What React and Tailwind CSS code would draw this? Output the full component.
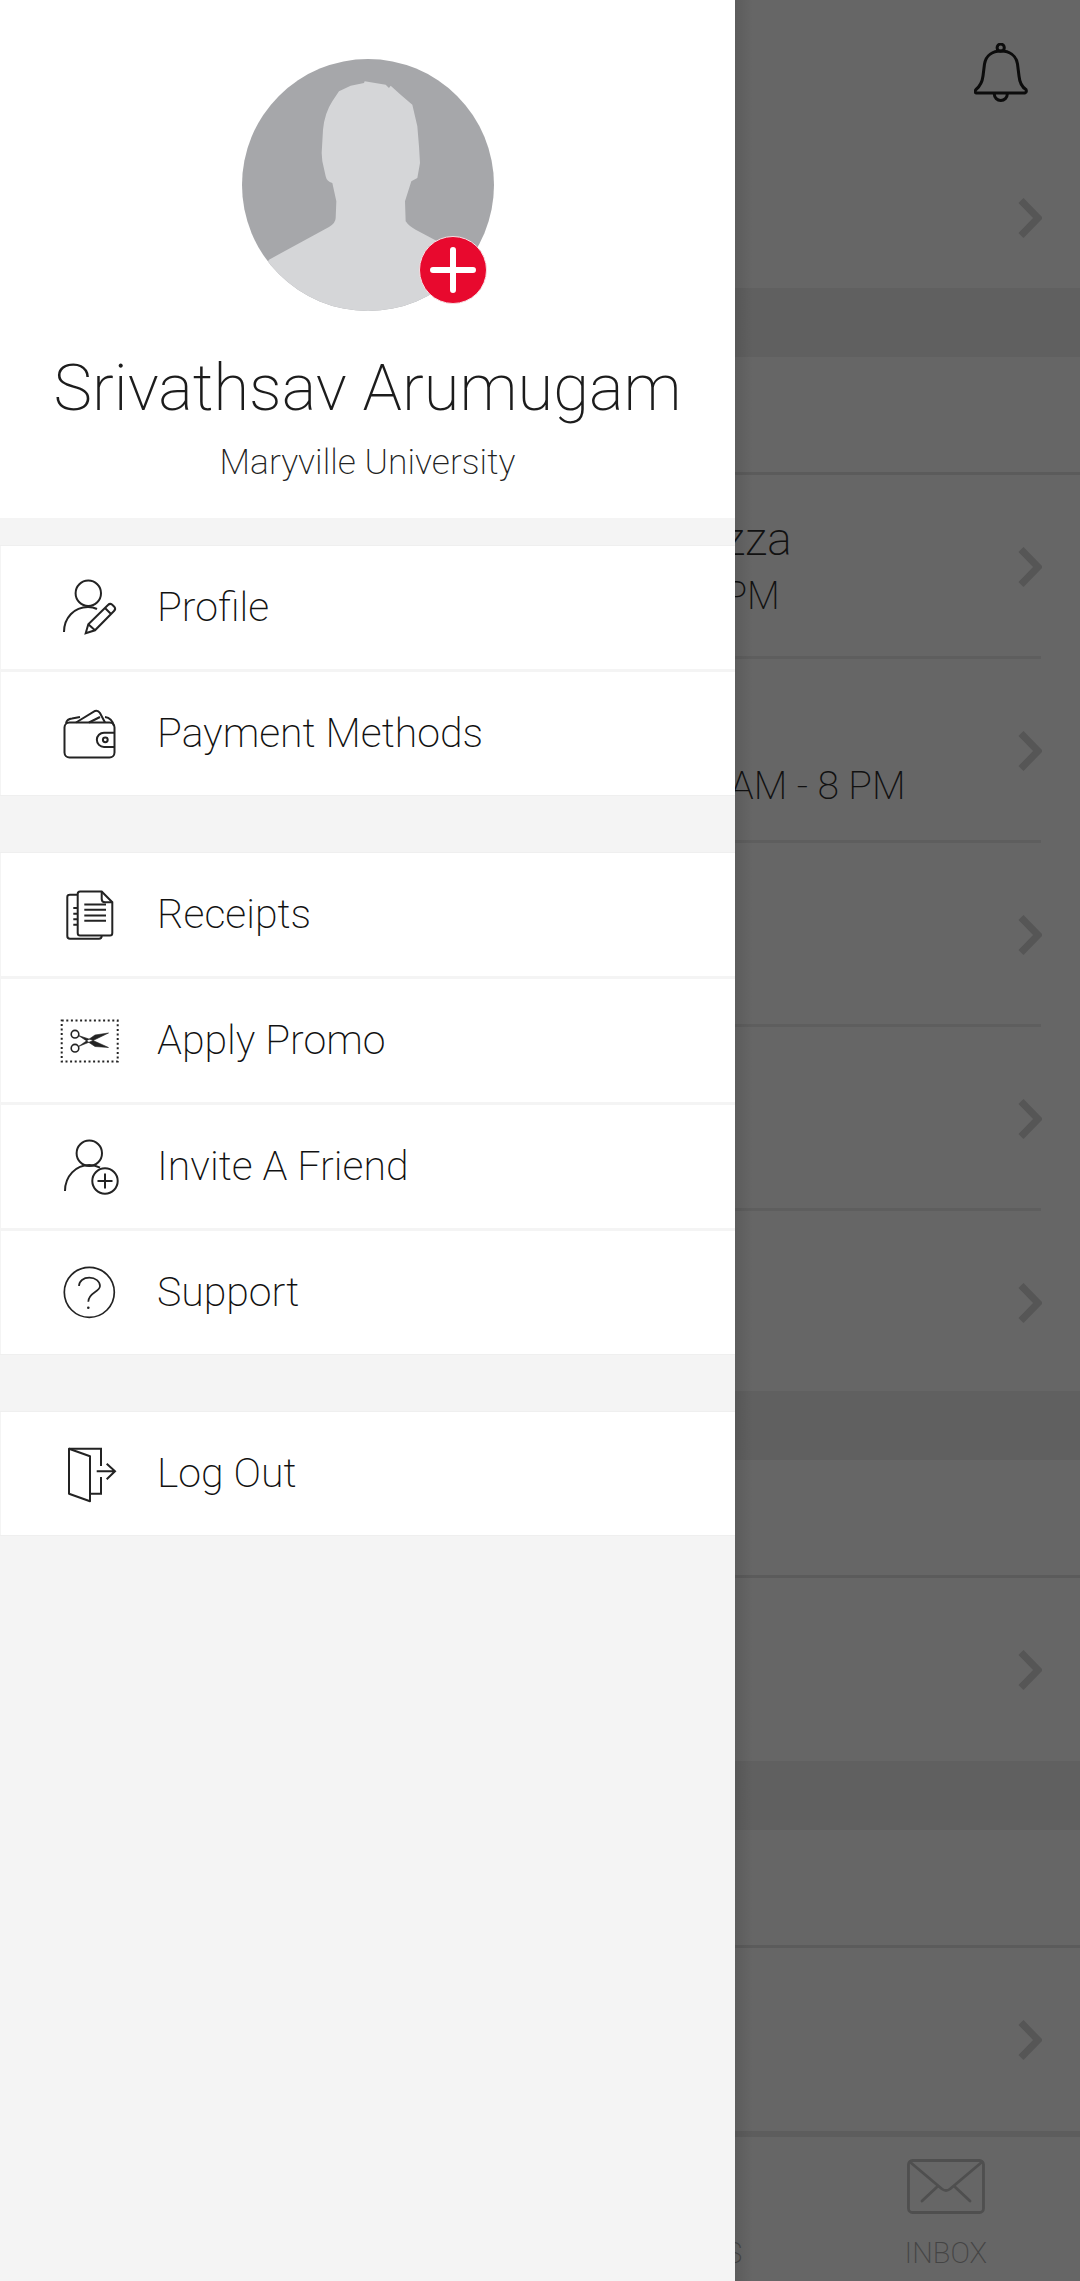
import { useId } from "react";

const ink = "#232323";

function Avatar() {
  const clip = useId();
  return (
    <div className="relative w-[252px] h-[252px]">
      <svg width="252" height="252" viewBox="124 88 756 756">
        <clipPath id={clip}>
          <circle cx="502" cy="466" r="378" />
        </clipPath>
        <circle cx="502" cy="466" r="378" fill="#a6a7aa" />
        <path
          clipPath={`url(#${clip})`}
          fill="#d5d6d8"
          d="M205 690 L385 592 Q405 580 405 565 L407 515 L395 460 Q378 455 375 440 L365 395 L363 370 L367 300 Q372 250 395 215 L415 185 L450 168 L490 160 L492 155 L555 165 L565 175 L570 168 L600 195 L635 225 L650 290 L655 350 L658 400 L650 445 L632 455 L613 515 L615 575 Q625 590 645 600 L720 640 L900 860 L100 860 Z"
        />
      </svg>
      <div className="absolute left-[177px] top-[177px] w-[68px] h-[68px] rounded-full bg-[#e8092e] border border-[#f7dfe3] flex items-center justify-center">
        <svg width="46" height="46" viewBox="0 0 46 46">
          <path d="M23 3 V43 M3 23 H43" stroke="#fff" strokeWidth="6" strokeLinecap="round" />
        </svg>
      </div>
    </div>
  );
}

function Glyph({ children }) {
  return (
    <svg width="60" height="60" viewBox="0 0 60 60" fill="none" stroke={ink} strokeWidth="2" className="shrink-0">
      {children}
    </svg>
  );
}

const icons = {
  profile: (
    <Glyph>
      <circle cx="29.3" cy="15.3" r="12.7" />
      <path d="M5 54 C5 40 15 29 29 29 C32 29 35 29.5 38 31" />
      <path d="M26.7 55.3 L29.3 46.3 L49 27 Q51 25 53 26.5 L55.5 29 Q57 31 55 33 L36 52.3 Z M29.3 46.3 L36 52.3 M46 30 L52 36" />
    </Glyph>
  ),
  wallet: (
    <Glyph>
      <rect x="5.5" y="18.5" width="50" height="35" rx="5" />
      <path d="M7 19 Q8 15 13 14.5 L21 13 M17 18.5 L36 7 Q39 6 41 9 L46 18.5 M30 18.5 L41 13 M46 13 Q53 14 55 22" />
      <path d="M55.3 28.7 H45 a7 7 0 0 0 0 14.3 H55.3" />
      <circle cx="46.3" cy="35.8" r="2.4" />
    </Glyph>
  ),
  receipts: (
    <Glyph>
      <path d="M18.7 9.8 H11 Q8.3 9.8 8.3 12 V51 Q8.3 53.8 11 53.8 H40 Q42.7 53.8 42.7 50.5" />
      <path d="M21 6.5 H42.7 L53.3 17.2 V48 Q53.3 50.5 51 50.5 H21 Q18.7 50.5 18.7 48 V9 Q18.7 6.5 21 6.5 Z" />
      <path d="M42.7 6.5 V14 Q42.7 17.2 46 17.2 H53.3" />
      <path d="M25.3 19.5 H47 M25.3 24.8 H47 M25.3 30.5 H47 M25.3 35.8 H47 M14.3 23 H18.7 M14.3 28.8 H18.7 M14.3 34.2 H18.7 M14.3 39.8 H18.7" />
    </Glyph>
  ),
  promo: (
    <Glyph>
      <rect x="2.7" y="9.5" width="56" height="41" strokeDasharray="2 2.6" />
      <circle cx="16" cy="23.2" r="3.8" strokeWidth="1.6" />
      <circle cx="16" cy="37.2" r="3.8" strokeWidth="1.6" />
      <path fill={ink} stroke={ink} strokeWidth="0.6" d="M19.5 24.5 L33 29 L49.5 36.5 L36 35.5 Z M19.5 35.5 L33 30 L49.5 22 L36 24 Z" />
    </Glyph>
  ),
  invite: (
    <Glyph>
      <circle cx="30.3" cy="16.3" r="12.7" />
      <path d="M6 54 C6 39 17 28 30.3 28 C34 28 38 29 41 30.7" />
      <circle cx="46" cy="44" r="12.7" />
      <path d="M46 36.5 V51.5 M38.5 44 H53.5" />
    </Glyph>
  ),
  support: (
    <Glyph>
      <circle cx="30.3" cy="29.3" r="25" strokeWidth="1.7" />
      <path strokeWidth="1.7" d="M20 23 C20 18 24.5 14.7 30.3 14.7 C36.5 14.7 41 18.3 41 23 C41 29 29.3 29.5 29.3 38.7" />
      <circle cx="29.3" cy="44.7" r="1.3" fill={ink} stroke="none" />
    </Glyph>
  ),
  logout: (
    <Glyph>
      <path d="M10 4.7 L31 12.3 V57.3 L10 49.7 Z" strokeLinejoin="round" />
      <path d="M10 4.7 H42 V22 M42 33 V49.7 H31" />
      <path d="M37.7 27.3 H56 M47.7 19.7 L56 27.3 L47.7 35.3" />
    </Glyph>
  ),
};

const groups = [
  [
    { icon: "profile", label: "Profile" },
    { icon: "wallet", label: "Payment Methods" },
  ],
  [
    { icon: "receipts", label: "Receipts" },
    { icon: "promo", label: "Apply Promo" },
    { icon: "invite", label: "Invite A Friend" },
    { icon: "support", label: "Support" },
  ],
  [{ icon: "logout", label: "Log Out" }],
];

function Drawer() {
  return (
    <aside className="absolute left-0 top-0 h-full w-[735px] bg-[#f4f4f4] flex flex-col">
      <div className="bg-white h-[518px] pt-[59px] flex flex-col items-center">
        <Avatar />
        <div className="mt-[37px] text-[65px] leading-[80px] font-extralight text-[#1c1c1c]">Srivathsav Arumugam</div>
        <div className="mt-[12px] text-[35.5px] leading-[44px] font-extralight text-[#222]">Maryville University</div>
      </div>
      <div className="pt-[27px] flex flex-col gap-[56px]">
        {groups.map((group, i) => (
          <div key={i} className="flex flex-col gap-[3px] border-y border-[#efefef]">
            {group.map((row) => (
              <div key={row.label} className="h-[123px] ml-[1px] bg-white flex items-center pl-[58px]">
                {icons[row.icon]}
                <span className="ml-[38px] text-[41px] font-extralight text-[#111]">{row.label}</span>
              </div>
            ))}
          </div>
        ))}
      </div>
    </aside>
  );
}

function Chevron({ className = "" }) {
  return (
    <svg width="24" height="40" viewBox="0 0 24 40" fill="none" className={className}>
      <path d="M3 2.5 L20 20 L3 37.5" stroke="#565656" strokeWidth="7" />
    </svg>
  );
}

function Band() {
  return <div className="h-[69px] bg-[#606060]" />;
}

function TitleRow() {
  return <div className="h-[118px] border-b-[3px] border-[#5b5b5b]" />;
}

function ListRow({ height = "h-[184px]", lines, last }) {
  return (
    <div className={`${height} flex items-center relative`}>
      {lines}
      <Chevron className="absolute right-[38px] top-[72px]" />
      {!last && <div className="absolute left-0 right-[39px] bottom-0 h-[3px] bg-[#5e5e5e]" />}
    </div>
  );
}

function App() {
  return (
    <div className="relative w-[1080px] h-[2281px] overflow-hidden bg-[#666666] font-['Roboto',sans-serif]">
      <main className="flex flex-col h-full">
        <div className="h-[146px] flex justify-end pt-[43px] pr-[52px]">
          <svg width="54" height="60" viewBox="0 0 54 60" fill="none" stroke="#0c0c0c" strokeWidth="3" strokeLinejoin="round">
            <circle cx="26.7" cy="4.7" r="3.6" />
            <path d="M2 50 H51 Q53 49 52 46.5 Q46 43 45 33 L43.5 21 C42 12 35 8 27 8 C19 8 12 12 10.5 21 L9 33 C8 41 5 44 2 46.5 Q0 49 2 50 Z" />
            <path d="M20.3 51 a6.5 6.5 0 0 0 13 0" />
          </svg>
        </div>
        <div className="h-[142px] relative">
          <Chevron className="absolute right-[38px] top-[52px]" />
        </div>
        <Band />
        <TitleRow />
        <ListRow
          lines={
            <div className="absolute left-[723px] top-[34px] font-extralight text-[#111]">
              <div className="text-[46px] leading-[60px]">zza</div>
              <div className="text-[38px] leading-[54px] ml-[1px]">PM</div>
            </div>
          }
        />
        <ListRow
          lines={
            <div className="absolute left-[730px] top-[103px] font-extralight text-[#111] text-[39px] leading-[48px]">AM - 8 PM</div>
          }
        />
        <ListRow />
        <ListRow />
        <ListRow height="h-[180px]" last />
        <Band />
        <TitleRow />
        <ListRow height="h-[183px]" last />
        <Band />
        <TitleRow />
        <ListRow height="h-[183px]" last />
        <div className="flex-1 border-t-[6px] border-[#5d5d5d] flex relative">
          <span className="ml-[725px] mt-[99px] text-[29px] leading-[34px] font-extralight text-[#444]">S</span>
          <div className="ml-auto mr-[93px] pt-[22px] flex flex-col items-center">
            <svg width="78" height="55" viewBox="0 0 78 55" fill="none" stroke="#4f4f4f" strokeWidth="2.8" strokeLinejoin="round">
              <rect x="1.5" y="1.5" width="75" height="52" rx="4" />
              <path d="M3 3 L35 30 Q39 33 43 30 L75 3 M15 42 L31 27 M63 42 L47 27" strokeLinecap="round" />
            </svg>
            <span className="mt-[22px] text-[29px] leading-[34px] font-extralight text-[#444]">INBOX</span>
          </div>
        </div>
      </main>
      <div className="absolute left-[735px] top-0 h-full w-[18px] bg-linear-to-r from-black/10 to-transparent" />
      <Drawer />
    </div>
  );
}

export default App;
